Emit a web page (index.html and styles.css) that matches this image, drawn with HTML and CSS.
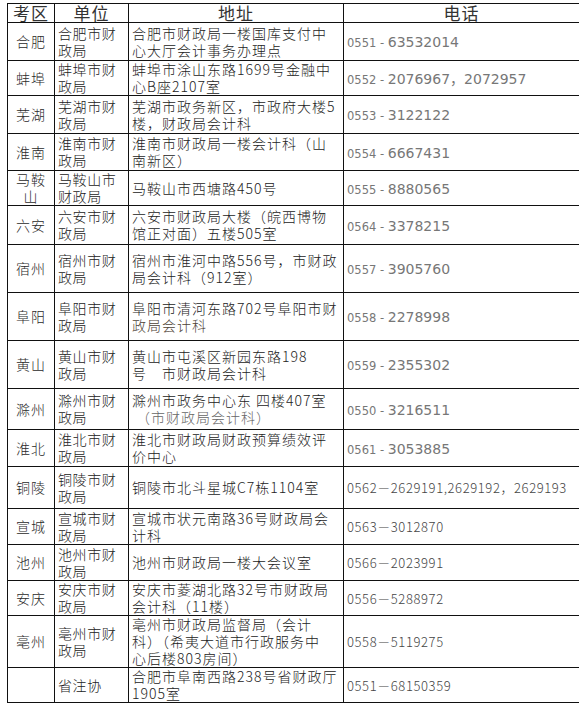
FILE: index.html
```html
<!DOCTYPE html>
<html lang="zh-CN">
<head>
<meta charset="utf-8">
<title>考区联系表</title>
<link rel="stylesheet" href="styles.css">
</head>
<body>
<table class="sheet">
  <colgroup>
    <col class="c-area">
    <col class="c-unit">
    <col class="c-addr">
    <col class="c-tel">
  </colgroup>
  <thead>
    <tr class="head">
      <th>考区</th><th>单位</th><th>地址</th><th>电话</th>
    </tr>
  </thead>
  <tbody>
    <tr class="h38">
      <td class="area">合肥</td>
      <td class="unit">合肥市财<br>政局</td>
      <td class="addr">合肥市财政局一楼国库支付中<br>心大厅会计事务办理点</td>
      <td class="tel"><span class="code">0551 - </span>63532014</td>
    </tr>
    <tr class="h35">
      <td class="area">蚌埠</td>
      <td class="unit">蚌埠市财<br>政局</td>
      <td class="addr">蚌埠市涂山东路1699号金融中<br>心B座2107室</td>
      <td class="tel"><span class="code">0552 - </span>2076967，2072957</td>
    </tr>
    <tr class="h38">
      <td class="area">芜湖</td>
      <td class="unit">芜湖市财<br>政局</td>
      <td class="addr">芜湖市政务新区，市政府大楼5<br>楼，财政局会计科</td>
      <td class="tel"><span class="code">0553 - </span>3122122</td>
    </tr>
    <tr class="h37">
      <td class="area">淮南</td>
      <td class="unit">淮南市财<br>政局</td>
      <td class="addr">淮南市财政局一楼会计科（山<br>南新区）</td>
      <td class="tel"><span class="code">0554 - </span>6667431</td>
    </tr>
    <tr class="h34">
      <td class="area">马鞍<br>山</td>
      <td class="unit">马鞍山市<br>财政局</td>
      <td class="addr">马鞍山市西塘路450号</td>
      <td class="tel"><span class="code">0555 - </span>8880565</td>
    </tr>
    <tr class="h39">
      <td class="area">六安</td>
      <td class="unit">六安市财<br>政局</td>
      <td class="addr">六安市财政局大楼（皖西博物<br>馆正对面）五楼505室</td>
      <td class="tel"><span class="code">0564 - </span>3378215</td>
    </tr>
    <tr class="h48">
      <td class="area">宿州</td>
      <td class="unit">宿州市财<br>政局</td>
      <td class="addr">宿州市淮河中路556号，市财政<br>局会计科（912室）</td>
      <td class="tel"><span class="code">0557 - </span>3905760</td>
    </tr>
    <tr class="h48">
      <td class="area">阜阳</td>
      <td class="unit">阜阳市财<br>政局</td>
      <td class="addr">阜阳市清河东路702号阜阳市财<br><span class="warm">政局会计科</span></td>
      <td class="tel"><span class="code">0558 - </span>2278998</td>
    </tr>
    <tr class="h48">
      <td class="area">黄山</td>
      <td class="unit">黄山市财<br>政局</td>
      <td class="addr">黄山市屯溪区新园东路198<br>号　市财政局会计科</td>
      <td class="tel"><span class="code">0559 - </span>2355302</td>
    </tr>
    <tr class="h41">
      <td class="area">滁州</td>
      <td class="unit">滁州市财<br>政局</td>
      <td class="addr">滁州市政务中心东 四楼407室<br><span class="soft">&nbsp;（市财政局会计科）</span></td>
      <td class="tel"><span class="code">0550 - </span>3216511</td>
    </tr>
    <tr class="h37">
      <td class="area">淮北</td>
      <td class="unit">淮北市财<br>政局</td>
      <td class="addr">淮北市财政局财政预算绩效评<br>价中心</td>
      <td class="tel"><span class="code">0561 - </span>3053885</td>
    </tr>
    <tr class="h42">
      <td class="area">铜陵</td>
      <td class="unit">铜陵市财<br>政局</td>
      <td class="addr">铜陵市北斗星城C7栋1104室</td>
      <td class="tel mono">0562－2629191,2629192，2629193</td>
    </tr>
    <tr class="h36">
      <td class="area">宣城</td>
      <td class="unit">宣城市财<br>政局</td>
      <td class="addr">宣城市状元南路36号财政局会<br>计科</td>
      <td class="tel mono">0563－3012870</td>
    </tr>
    <tr class="h36">
      <td class="area">池州</td>
      <td class="unit">池州市财<br>政局</td>
      <td class="addr">池州市财政局一楼大会议室</td>
      <td class="tel mono">0566－2023991</td>
    </tr>
    <tr class="h35">
      <td class="area">安庆</td>
      <td class="unit">安庆市财<br>政局</td>
      <td class="addr">安庆市菱湖北路32号市财政局<br>会计科（11楼）</td>
      <td class="tel mono">0556－5288972</td>
    </tr>
    <tr class="h52">
      <td class="area">亳州</td>
      <td class="unit">亳州市财<br>政局</td>
      <td class="addr">亳州市财政局监督局（会计<br>科）（希夷大道市行政服务中<br>心后楼803房间）</td>
      <td class="tel mono">0558－5119275</td>
    </tr>
    <tr class="h34">
      <td class="area"></td>
      <td class="unit">省注协</td>
      <td class="addr">合肥市阜南西路238号省财政厅<br>1905室</td>
      <td class="tel mono">0551－68150359</td>
    </tr>
  </tbody>
</table>
</body>
</html>
```
FILE: styles.css
```css
html, body {
  margin: 0;
  padding: 0;
  background: #ffffff;
}

body {
  padding: 3px 0 0 7px;
  font-family: "Noto Sans CJK SC", "Noto Sans", sans-serif;
  color: #222222;
}

.sheet {
  border-collapse: collapse;
  table-layout: fixed;
  width: 572px;
}

.c-area { width: 47px; }
.c-unit { width: 74px; }
.c-addr { width: 215px; }
.c-tel  { width: 236px; }

.sheet th,
.sheet td {
  border: 1px solid #111111;
  padding: 0 1px 0 3px;
  vertical-align: middle;
  white-space: nowrap;
}

.sheet td {
  overflow: hidden;
}

.head { height: 19px; }

.head th {
  font-size: 17px;
  line-height: 18px;
  font-weight: 400;
  color: #333333;
  text-align: center;
  letter-spacing: 1px;
  padding: 0;
}

.sheet td {
  font-size: 14px;
  line-height: 17px;
  font-weight: 300;
  text-align: left;
}

.area {
  text-align: center !important;
  letter-spacing: 1px;
  padding: 0 !important;
  color: #2a2a2a;
}

.unit {
  letter-spacing: 0.6px;
}

.addr {
  letter-spacing: 1px;
}

.warm { color: #4d4235; }
.soft { color: #666666; }

.tel {
  font-family: "DejaVu Sans", "Noto Sans CJK SC", sans-serif;
  font-size: 14px;
  font-weight: 400 !important;
  color: #777777;
  padding-top: 3px !important;
}

.tel .code {
  font-size: 11.5px;
}

.tel.mono {
  font-family: "Noto Sans CJK SC", sans-serif;
  font-size: 13px;
  font-weight: 300 !important;
  padding-top: 0 !important;
  letter-spacing: 0.6px;
  color: #444444;
}

.h34 { height: 34px; }
.h35 { height: 35px; }
.h36 { height: 36px; }
.h37 { height: 37px; }
.h38 { height: 38px; }
.h39 { height: 39px; }
.h41 { height: 41px; }
.h42 { height: 42px; }
.h48 { height: 48px; }
.h52 { height: 52px; }
```
